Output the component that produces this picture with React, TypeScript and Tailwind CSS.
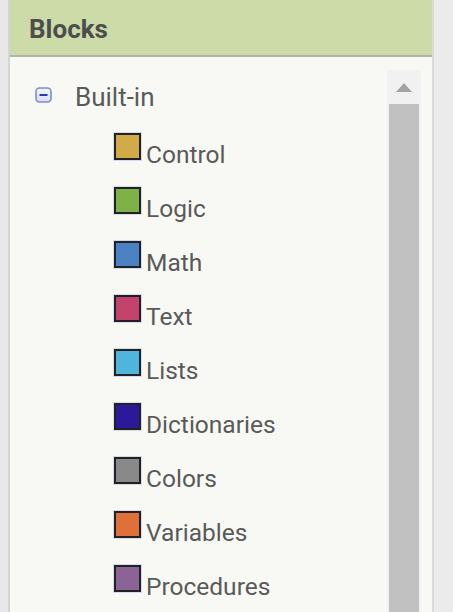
const categories = [
  { name: "Control", color: "bg-[#d3aa48]" },
  { name: "Logic", color: "bg-[#7fb149]" },
  { name: "Math", color: "bg-[#4a82c3]" },
  { name: "Text", color: "bg-[#c3436c]" },
  { name: "Lists", color: "bg-[#4fb5dd]" },
  { name: "Dictionaries", color: "bg-[#2c1899]" },
  { name: "Colors", color: "bg-[#898989]" },
  { name: "Variables", color: "bg-[#e0703a]" },
  { name: "Procedures", color: "bg-[#8b6397]" },
];

function CollapseIcon() {
  return (
    <svg width="17" height="16" viewBox="0 0 17 16" className="inline-block align-baseline mb-[3px] mr-[23px]">
      <defs>
        <linearGradient id="cg" x1="0" y1="0" x2="0" y2="1">
          <stop offset="0" stopColor="#f4f5fb" />
          <stop offset="1" stopColor="#d9ddef" />
        </linearGradient>
      </defs>
      <rect x="1" y="1" width="15" height="14" rx="3.5" fill="url(#cg)" stroke="#7f8bc9" strokeWidth="1.6" />
      <rect x="4.5" y="7" width="8" height="2" fill="#2a3ab5" />
    </svg>
  );
}

export default function App() {
  return (
    <div
      className="w-[453px] h-[612px] flex overflow-hidden bg-[#e9e9e9]"
      style={{ fontFamily: "Roboto, 'Liberation Sans', sans-serif" }}
    >
      {/* left gutter */}
      <div className="w-[10px] shrink-0 bg-[#e8e8e8] border-r-2 border-[#d5d5d5]" />

      {/* blocks panel */}
      <div className="w-[422px] shrink-0 flex flex-col bg-[#f8f9f4]">
        <div className="h-[57px] shrink-0 bg-[#ccdba8] border-b-2 border-[#b2b6aa] flex items-center pl-[19px] pt-[3px]">
          <span className="text-[26px] font-bold text-[#4d4d4d] leading-none">Blocks</span>
        </div>

        <div className="flex-1 flex min-h-0">
          <div className="flex-1 pt-[13px]">
            <div className="h-[54px] leading-[54px] pl-[25px] text-[26px] text-[#5a5a5a] whitespace-nowrap">
              <CollapseIcon />
              <span>Built-in</span>
            </div>
            <div className="mt-[4px]">
              {categories.map((c) => (
                <div
                  key={c.name}
                  className="h-[54px] leading-[54px] pl-[104px] text-[24.5px] text-[#5a5a5a] whitespace-nowrap"
                >
                  <span
                    className={`inline-block align-baseline w-[27px] h-[27px] mb-[3px] mr-[5px] border-2 border-[#222222] ring-1 ring-[#d3dcec] ${c.color}`}
                  />
                  <span>{c.name}</span>
                </div>
              ))}
            </div>
          </div>

          {/* scrollbar */}
          <div className="w-[34px] shrink-0 mt-[13px] mr-[11px] bg-[#f1f1f1] flex flex-col">
            <div className="h-[34px] flex items-center justify-center">
              <svg width="16" height="9" viewBox="0 0 16 9">
                <polygon points="8,0 16,9 0,9" fill="#a3a3a3" />
              </svg>
            </div>
            <div className="flex-1 mx-[2px] bg-[#c1c1c1]" />
          </div>
        </div>
      </div>

      {/* right gutter */}
      <div className="flex-1 bg-[#ebebeb] border-l-2 border-[#dadada]" />
    </div>
  );
}
